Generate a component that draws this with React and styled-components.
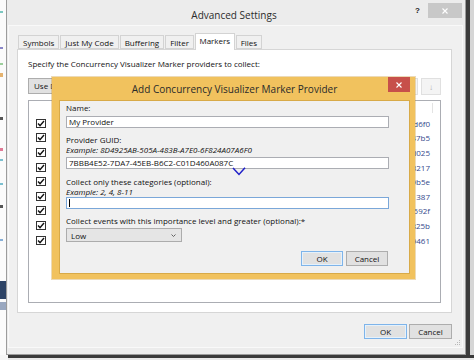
import React from 'react';
import styled, { createGlobalStyle } from 'styled-components';

const Global = createGlobalStyle`
  html, body { margin: 0; padding: 0; background: #f6f6f6; }
  body { font-family: "Open Sans", "Noto Sans", sans-serif; color: #111; }
  * { box-sizing: border-box; }
`;

const Page = styled.div`
  position: relative;
  width: 474px;
  height: 360px;
  overflow: hidden;
  display: flex;
  flex-direction: column;
  background: #f6f6f6;
`;

const Row = styled.div`
  display: flex;
  height: 355px;
`;

const Backdrop = styled.div`
  width: 6px;
  background: #fbfbfb;
  display: flex;
  flex-direction: column;
  padding-top: 11px;
`;

const Mark = styled.div`
  height: ${p => p.$h || 2}px;
  width: ${p => p.$w || 3}px;
  margin-top: ${p => p.$t}px;
  background: ${p => p.$c};
`;

const Shadow = styled.div`
  width: 8px;
  display: flex;
`;
const ShadowDark = styled.div`
  width: 4px;
  background: #3c3c3c;
`;
const ShadowLight = styled.div`
  flex: 1;
  background: #d6d6d6;
`;
const BottomShadow = styled.div`
  height: 5px;
  margin-left: 8px;
  border-top: 3px solid #3a3a3a;
  background: #e8e8e8;
`;

const Window = styled.div`
  width: 460px;
  height: 355px;
  background: #ececec;
  border: 1px solid #9c9c9c;
  border-top: none;
  display: flex;
  flex-direction: column;
`;

const TitleBar = styled.div`
  height: 25px;
  display: grid;
  grid-template-columns: 1fr auto 1fr;
  align-items: start;
`;

const Title = styled.div`
  grid-column: 2;
  font-size: 10px;
  line-height: 12px;
  margin-top: 9px;
  margin-left: -4px;
  color: #2b2b2b;
`;

const Caption = styled.div`
  grid-column: 3;
  justify-self: end;
  display: flex;
  align-items: flex-start;
  gap: 8px;
  margin-right: 3px;
  margin-top: 3px;
`;

const Help = styled.span`
  font-family: "Liberation Sans", sans-serif;
  font-weight: bold;
  font-size: 8px;
  line-height: 8px;
  margin-top: 4px;
  color: #222;
`;

const CloseGray = styled.div`
  width: 34px;
  height: 15px;
  background: #c8c8c8;
  display: flex;
  align-items: center;
  justify-content: center;
`;

const Client = styled.div`
  position: relative;
  flex: 1;
  margin: 0 2px 6px 1px;
  background: #f0f0f0;
  border: 1px solid #f9f9f9;
  padding: 7px 10px 8px 8px;
  display: flex;
  flex-direction: column;
`;

const Tabs = styled.div`
  display: flex;
  align-items: flex-end;
  height: 16px;
  padding-left: 1px;
  gap: 1px;
`;

const Tab = styled.div`
  height: ${p => (p.$active ? 17 : 14)}px;
  margin-bottom: ${p => (p.$active ? -1 : 0)}px;
  position: relative;
  z-index: ${p => (p.$active ? 1 : 0)};
  padding: 0 ${p => (p.$active ? 3.5 : 4)}px;
  font-size: 8px;
  line-height: 13px;
  background: ${p => (p.$active ? '#ffffff' : '#f0f0f0')};
  border: 1px solid #d3d3d3;
  border-bottom: ${p => (p.$active ? 'none' : '1px solid #d3d3d3')};
  color: #111;
  white-space: nowrap;
`;

const Panel = styled.div`
  flex: 1;
  background: #ffffff;
  border: 1px solid #d6d6d6;
  padding: 8px 10px 9px 10px;
  display: flex;
  flex-direction: column;
`;

const Text = styled.div`
  font-size: 8px;
  line-height: 11px;
  white-space: nowrap;
`;

const ToolRow = styled.div`
  margin-top: 9px;
  height: 16px;
  display: flex;
  justify-content: space-between;
`;

const Group = styled.div`
  display: flex;
  gap: 3px;
`;

const Btn = styled.div`
  height: ${p => p.$h || 16}px;
  width: ${p => (p.$w ? `${p.$w}px` : 'auto')};
  background: ${p => (p.$disabled ? '#f4f4f4' : '#e1e1e1')};
  border: 1px solid ${p => (p.$default ? '#7eb4ea' : p.$disabled ? '#e0e0e0' : '#adadad')};
  box-shadow: ${p => (p.$default ? 'inset 0 0 0 1px #e5f1fb' : 'none')};
  font-size: 8px;
  line-height: ${p => (p.$h || 16) - 2}px;
  color: ${p => (p.$disabled ? '#b0b0b0' : '#111')};
  display: flex;
  align-items: center;
  padding: ${p => (p.$pad ? '0 5px' : '0')};
  justify-content: ${p => (p.$pad ? 'flex-start' : 'center')};
  white-space: nowrap;
`;

const List = styled.div`
  margin-top: 6px;
  flex: 1;
  border: 1px solid #abadb3;
  background: #fff;
  display: flex;
  flex-direction: column;
`;

const Header = styled.div`
  height: 12px;
  display: flex;
`;

const HeaderCell = styled.div`
  flex: ${p => (p.$fill ? 1 : 'none')};
  width: ${p => (p.$w ? `${p.$w}px` : 'auto')};
  margin-top: 2px;
  border-right: ${p => (p.$sep ? '1px solid #e3e3e3' : 'none')};
`;

const Rows = styled.div`
  margin-top: 3px;
  display: flex;
  flex-direction: column;
`;

const ListRow = styled.div`
  height: 14.6px;
  display: flex;
  align-items: center;
  padding: 0 10px 0 7px;
`;

const Check = styled.div`
  width: 10px;
  height: 9px;
  border: 1px solid #333;
  background: #fff;
  display: flex;
  align-items: center;
  justify-content: center;
`;

const Guid = styled.div`
  margin-left: auto;
  font-size: 8px;
  line-height: 11px;
  color: #34498c;
  white-space: nowrap;
`;

const Footer = styled.div`
  margin-top: 11px;
  display: flex;
  justify-content: flex-end;
  gap: 2px;
`;

const Grip = styled.svg`
  position: absolute;
  right: 1px;
  bottom: 1px;
`;

/* Overlay dialog */
const Dialog = styled.div`
  position: absolute;
  left: 52px;
  top: 77px;
  width: 363px;
  height: 202px;
  background: #f1c25e;
  padding: 0 5px 5px 7px;
  display: flex;
  flex-direction: column;
  box-shadow: 0 0 0 1px rgba(200, 150, 50, 0.35);
`;

const DlgTitleBar = styled.div`
  height: 23px;
  display: grid;
  grid-template-columns: 1fr auto 1fr;
  align-items: start;
`;

const DlgTitle = styled.div`
  grid-column: 2;
  font-size: 10px;
  line-height: 12px;
  margin-top: 6px;
  color: #2a2a2a;
  white-space: nowrap;
`;

const RedClose = styled.div`
  grid-column: 3;
  justify-self: end;
  width: 22px;
  height: 15px;
  background: #c7504a;
  display: flex;
  align-items: center;
  justify-content: center;
`;

const DlgClient = styled.div`
  position: relative;
  flex: 1;
  background: #f0f0f0;
  border: 1px solid #d8aa48;
  padding: 2px 20px 0 6px;
  display: flex;
  flex-direction: column;
`;

const Label = styled.div`
  margin-top: ${p => p.$mt || 0}px;
  font-size: 8px;
  line-height: 10px;
  font-style: ${p => (p.$italic ? 'italic' : 'normal')};
  color: #111;
  white-space: nowrap;
`;

const TextBox = styled.div`
  margin-top: ${p => p.$mt || 0}px;
  height: 12px;
  background: #fff;
  border: 1px solid ${p => (p.$focus ? '#7aa7d9' : '#abadb3')};
  font-size: 8px;
  line-height: 10px;
  padding-left: 2px;
  display: flex;
  align-items: center;
  white-space: nowrap;
`;

const Caret = styled.span`
  width: 1px;
  height: 8px;
  background: #000;
`;

const Combo = styled.div`
  margin-top: 2px;
  width: 116px;
  height: 14px;
  background: #e5e5e5;
  border: 1px solid #acacac;
  display: flex;
  align-items: center;
  justify-content: space-between;
  padding: 0 5px 0 4px;
  font-size: 8px;
`;

const DlgFooter = styled.div`
  margin-top: 9px;
  padding-right: 1px;
  display: flex;
  justify-content: flex-end;
  gap: 3px;
`;

const Annot = styled.svg`
  position: absolute;
  left: 172px;
  top: 66px;
`;

const X = ({ c = '#fff', s = 6 }) => (
  <svg width={s} height={s} viewBox="0 0 6 6">
    <path d="M0.5 0.5 L5.5 5.5 M5.5 0.5 L0.5 5.5" stroke={c} strokeWidth="1.1" />
  </svg>
);

const Tick = () => (
  <svg width="8" height="7" viewBox="0 0 8 7">
    <path d="M1 3.6 L3 5.6 L7 1" fill="none" stroke="#111" strokeWidth="1.4" />
  </svg>
);

const rows = ['c2b4d6f0', '9e2a47b5', 'f6a8c0d025', '8f0c3217', '7e9b5e', '7a9c1387', '3f5592f', 'a6c825b', '7d9461'];

const tabs = ['Symbols', 'Just My Code', 'Buffering', 'Filter', 'Markers', 'Files'];

export default function App() {
  return (
    <>
      <Global />
      <Page>
        <Row>
          <Backdrop>
            <Mark $c="#7cc7c0" $t={0} />
            <Mark $c="#8a86c8" $t={34} />
            <Mark $c="#9ccf9c" $t={14} />
            <Mark $c="#e5b36f" $t={8} $h={4} />
            <Mark $c="#555" $t={40} $h={3} />
            <Mark $c="#e07a96" $t={28} $h={3} />
            <Mark $c="#7cc0d0" $t={8} />
            <Mark $c="#7cc0d0" $t={22} />
            <Mark $c="#555" $t={20} $h={3} />
            <Mark $c="#88b0d8" $t={31} />
            <Mark $c="#2e4466" $t={40} $h={18} $w={6} />
            <Mark $c="#9aa8c0" $t={3} $h={8} $w={6} />
          </Backdrop>
          <Window>
            <TitleBar>
              <Title>Advanced Settings</Title>
              <Caption>
                <Help>?</Help>
                <CloseGray>
                  <X />
                </CloseGray>
              </Caption>
            </TitleBar>
            <Client>
              <Tabs>
                {tabs.map(t => (
                  <Tab key={t} $active={t === 'Markers'}>
                    {t}
                  </Tab>
                ))}
              </Tabs>
              <Panel>
                <Text>Specify the Concurrency Visualizer Marker providers to collect:</Text>
                <ToolRow>
                  <Group>
                    <Btn $pad $w={60}>Use Defaults</Btn>
                  </Group>
                  <Group>
                    <Btn $w={20} $h={17} $disabled>
                      ↑
                    </Btn>
                    <Btn $w={20} $h={17} $disabled>
                      ↓
                    </Btn>
                  </Group>
                </ToolRow>
                <List>
                  <Header>
                    <HeaderCell $w={20} />
                    <HeaderCell $fill $sep />
                    <HeaderCell $w={7} />
                  </Header>
                  <Rows>
                    {rows.map(g => (
                      <ListRow key={g}>
                        <Check>
                          <Tick />
                        </Check>
                        <Guid>{g}</Guid>
                      </ListRow>
                    ))}
                  </Rows>
                </List>
              </Panel>
              <Footer>
                <Btn $w={43} $h={15} $default>
                  OK
                </Btn>
                <Btn $w={43} $h={15}>
                  Cancel
                </Btn>
              </Footer>
              <Grip width="7" height="7" viewBox="0 0 7 7">
                <g fill="#b8b8b8">
                  <rect x="5" y="1" width="1" height="1" />
                  <rect x="3" y="3" width="1" height="1" />
                  <rect x="5" y="3" width="1" height="1" />
                  <rect x="1" y="5" width="1" height="1" />
                  <rect x="3" y="5" width="1" height="1" />
                  <rect x="5" y="5" width="1" height="1" />
                </g>
              </Grip>
            </Client>
          </Window>
          <Shadow>
            <ShadowDark />
            <ShadowLight />
          </Shadow>
        </Row>
        <BottomShadow />

        <Dialog>
          <DlgTitleBar>
            <DlgTitle>Add Concurrency Visualizer Marker Provider</DlgTitle>
            <RedClose>
              <X />
            </RedClose>
          </DlgTitleBar>
          <DlgClient>
            <Label>Name:</Label>
            <TextBox $mt={3}>My Provider</TextBox>
            <Label $mt={7}>Provider GUID:</Label>
            <Label $italic>Example: 8D4925AB-505A-483B-A7E0-6F824A07A6F0</Label>
            <TextBox $mt={2}>7BBB4E52-7DA7-45EB-B6C2-C01D460A087C</TextBox>
            <Label $mt={8}>Collect only these categories (optional):</Label>
            <Label $italic>Example: 2, 4, 8-11</Label>
            <TextBox $focus>
              <Caret />
            </TextBox>
            <Label $mt={7}>Collect events with this importance level and greater (optional):*</Label>
            <Combo>
              <span>Low</span>
              <svg width="5" height="3" viewBox="0 0 5 3">
                <path d="M0.5 0.5 L2.5 2.5 L4.5 0.5" fill="none" stroke="#555" strokeWidth="0.9" />
              </svg>
            </Combo>
            <DlgFooter>
              <Btn $w={42} $h={15} $default>
                OK
              </Btn>
              <Btn $w={42} $h={15}>
                Cancel
              </Btn>
            </DlgFooter>
            <Annot width="14" height="9" viewBox="0 0 14 9">
              <path d="M1 1 L7 7.5 L13 0.8" fill="none" stroke="#1f1fc8" strokeWidth="1.5" />
            </Annot>
          </DlgClient>
        </Dialog>
      </Page>
    </>
  );
}
